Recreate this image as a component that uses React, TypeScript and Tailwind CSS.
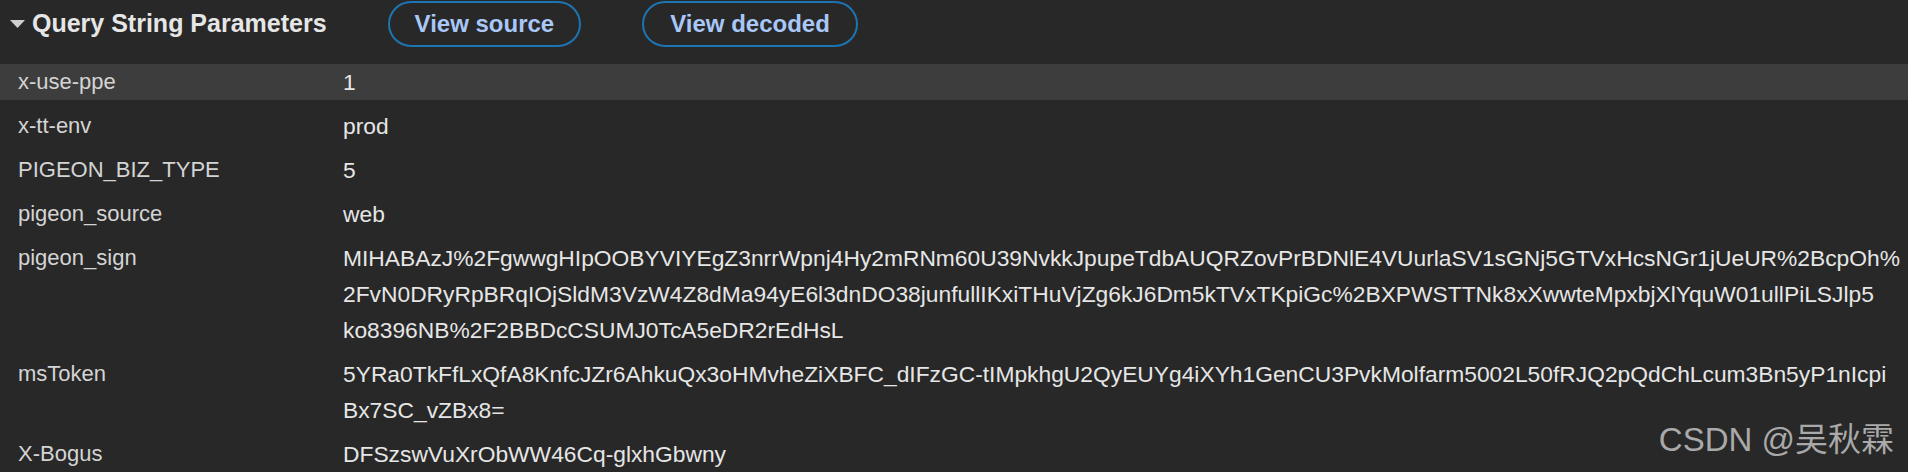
import React from 'react';

const params: { name: string; lines: string[] }[] = [
  { name: 'x-use-ppe', lines: ['1'] },
  { name: 'x-tt-env', lines: ['prod'] },
  { name: 'PIGEON_BIZ_TYPE', lines: ['5'] },
  { name: 'pigeon_source', lines: ['web'] },
  {
    name: 'pigeon_sign',
    lines: [
      'MIHABAzJ%2FgwwgHIpOOBYVIYEgZ3nrrWpnj4Hy2mRNm60U39NvkkJpupeTdbAUQRZovPrBDNlE4VUurlaSV1sGNj5GTVxHcsNGr1jUeUR%2BcpOh%',
      '2FvN0DRyRpBRqIOjSldM3VzW4Z8dMa94yE6l3dnDO38junfullIKxiTHuVjZg6kJ6Dm5kTVxTKpiGc%2BXPWSTTNk8xXwwteMpxbjXlYquW01ullPiLSJlp5',
      'ko8396NB%2F2BBDcCSUMJ0TcA5eDR2rEdHsL',
    ],
  },
  {
    name: 'msToken',
    lines: [
      '5YRa0TkFfLxQfA8KnfcJZr6AhkuQx3oHMvheZiXBFC_dIFzGC-tIMpkhgU2QyEUYg4iXYh1GenCU3PvkMolfarm5002L50fRJQ2pQdChLcum3Bn5yP1nIcpi',
      'Bx7SC_vZBx8=',
    ],
  },
  { name: 'X-Bogus', lines: ['DFSzswVuXrObWW46Cq-glxhGbwny'] },
];

const App: React.FC = () => {
  return (
    <div className="relative w-[1908px] h-[472px] overflow-hidden bg-[#282828] font-['Liberation_Sans',Arial,sans-serif]">
      {/* Section header */}
      <div className="flex items-center h-12 pl-[10px]">
        <div className="flex items-center gap-[7px]">
          <svg width="15" height="8" viewBox="0 0 15 8">
            <path d="M0 0 L15 0 L7.5 8 Z" fill="#cfcfcf" />
          </svg>
          <span className="text-[25px] font-bold text-[#e6e6e6]">Query String Parameters</span>
        </div>
        <button className="ml-[61px] h-[46px] px-[25px] rounded-full border-2 border-[#1d74b3] text-[24px] font-bold text-[#a9c7f7]">
          View source
        </button>
        <button className="ml-[61px] h-[46px] px-[26px] rounded-full border-2 border-[#1d74b3] text-[24px] font-bold text-[#a9c7f7]">
          View decoded
        </button>
      </div>

      {/* Parameter rows */}
      <div className="mt-4 flex flex-col gap-2 leading-9">
        {params.map((p, i) => (
          <div key={p.name} className={`flex ${i === 0 ? 'bg-[#3d3d3d]' : ''}`}>
            <div className="w-[343px] shrink-0 pl-[18px] text-[22px] text-[#d4d4d4]">{p.name}</div>
            <div className="flex flex-col text-[22.8px] text-[#e6e6e6] whitespace-nowrap">
              {p.lines.map((line, j) => (
                <div key={j}>{line}</div>
              ))}
            </div>
          </div>
        ))}
      </div>

      {/* Watermark */}
      <div className="absolute right-[14px] top-[420px] text-[33px] leading-10 text-[#a9a9a9] font-['Liberation_Sans','Noto_Sans_CJK_SC',sans-serif]">
        CSDN @吴秋霖
      </div>
    </div>
  );
};

export default App;
